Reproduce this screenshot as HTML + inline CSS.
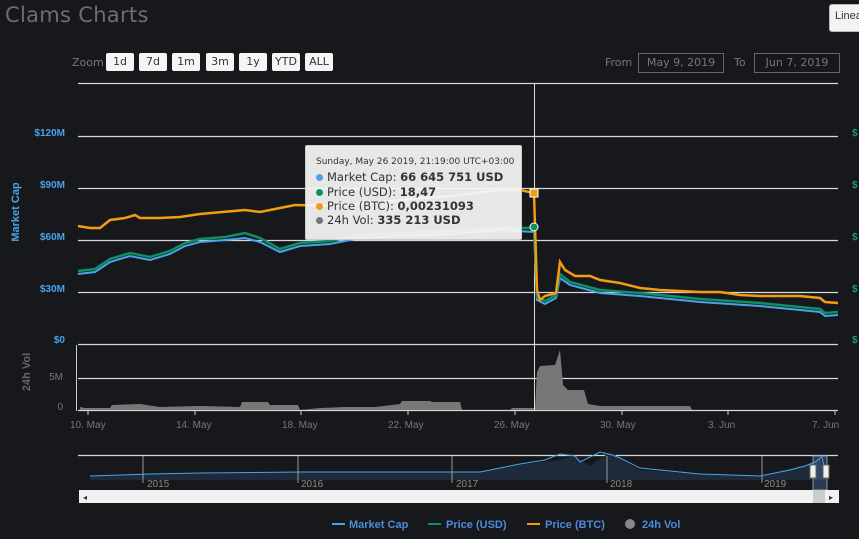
<!DOCTYPE html>
<html><head><meta charset="utf-8"><style>
body{margin:0;width:859px;height:539px;background:#17181c;overflow:hidden;font-family:"Liberation Sans","DejaVu Sans",sans-serif;position:relative}
.t{position:absolute;left:5px;top:3px;font-size:21px;color:#6e6e6e;font-family:"DejaVu Sans",sans-serif;letter-spacing:0.3px}
.btn{position:absolute;top:53px;height:18px;background:#f5f5f5;border-radius:2px;font-size:11px;color:#333;text-align:center;line-height:18px;font-family:"DejaVu Sans",sans-serif}
.lbl{position:absolute;font-size:11px;color:#777;font-family:"DejaVu Sans",sans-serif}
.inp{position:absolute;top:53px;height:18px;border:1px solid #666;color:#777;font-size:11px;line-height:18px;text-align:center;font-family:"DejaVu Sans",sans-serif}
.tip{position:absolute;left:305px;top:145px;width:215px;height:93px;background:rgba(247,247,247,0.93);border:1px solid #ccc;border-radius:2px;font-size:11.5px;color:#333;font-family:"DejaVu Sans",sans-serif}
.tip div{position:absolute;left:10px;white-space:nowrap}
.d{display:inline-block;width:7px;height:7px;border-radius:50%;margin-right:4px}
</style></head><body>
<div class="t">Clams Charts</div>
<div style="position:absolute;left:829px;top:4px;width:40px;height:26px;background:#f3f3f3;border:1px solid #bbb;border-radius:3px;font-size:11px;line-height:22px;padding-left:5px;color:#333">Linear</div>
<div class="lbl" style="left:72px;top:56px">Zoom</div>
<div class="btn" style="left:106px;width:28px">1d</div>
<div class="btn" style="left:139px;width:28px">7d</div>
<div class="btn" style="left:172px;width:28px">1m</div>
<div class="btn" style="left:206px;width:28px">3m</div>
<div class="btn" style="left:239px;width:28px">1y</div>
<div class="btn" style="left:272px;width:28px">YTD</div>
<div class="btn" style="left:305px;width:28px">ALL</div>
<div class="lbl" style="left:605px;top:56px">From</div>
<div class="inp" style="left:638px;width:84px">May 9, 2019</div>
<div class="lbl" style="left:734px;top:56px">To</div>
<div class="inp" style="left:754px;width:84px">Jun 7, 2019</div>
<svg width="859" height="539" style="position:absolute;left:0;top:0" font-family="Liberation Sans,sans-serif">
<g stroke="#d8d8d8" stroke-width="1.2">
<line x1="78" y1="83.5" x2="838" y2="83.5"/><line x1="78" y1="136.5" x2="838" y2="136.5"/><line x1="78" y1="188.5" x2="838" y2="188.5"/><line x1="78" y1="240.5" x2="838" y2="240.5"/><line x1="78" y1="292.5" x2="838" y2="292.5"/><line x1="78" y1="344.5" x2="838" y2="344.5"/><line x1="78" y1="378.5" x2="838" y2="378.5"/><line x1="78" y1="410.5" x2="838" y2="410.5"/>
<line x1="78" y1="455.5" x2="838" y2="455.5"/>
</g>
<line x1="76.5" y1="345" x2="76.5" y2="411" stroke="#ccc"/>
<g fill="#4aa3e8" font-size="10" font-weight="bold" text-anchor="end"><text x="65" y="136">$120M</text><text x="65" y="188">$90M</text><text x="65" y="240">$60M</text><text x="65" y="292">$30M</text><text x="65" y="343">$0</text></g>
<g fill="#1a9c70" font-size="10" font-weight="bold"><text x="852" y="136">$</text><text x="852" y="188">$</text><text x="852" y="240">$</text><text x="852" y="292">$</text><text x="852" y="343">$</text></g>
<text x="19" y="212" fill="#4aa3e8" font-size="11" font-weight="bold" transform="rotate(-90 19 212)" text-anchor="middle">Market Cap</text>
<text x="30" y="372" fill="#666" font-size="11" font-weight="bold" transform="rotate(-90 30 372)" text-anchor="middle">24h Vol</text>
<g fill="#777" font-size="10" text-anchor="end"><text x="63" y="380">5M</text><text x="63" y="410">0</text></g>
<path fill="#777" d="M80 410 L80 407 L85 408 L110 408 L112 405 L140 404 L160 407 L200 406 L240 407 L242 402 L268 402 L270 405 L298 405 L300 410 L320 408 L345 407 L375 407 L400 404 L402 401 L430 401 L432 402 L460 402 L462 410 L510 410 L512 408 L535 408 L537 372 L540 366 L555 365 L560 350 L563 385 L568 390 L584 390 L588 404 L600 406 L690 406 L692 410 Z"/>
<line x1="534.5" y1="84" x2="534.5" y2="411" stroke="#ddd"/>
<g stroke="#ccc"><line x1="88" y1="410" x2="88" y2="415"/><line x1="195" y1="410" x2="195" y2="415"/><line x1="301" y1="410" x2="301" y2="415"/><line x1="408" y1="410" x2="408" y2="415"/><line x1="515" y1="410" x2="515" y2="415"/><line x1="622" y1="410" x2="622" y2="415"/><line x1="728" y1="410" x2="728" y2="415"/><line x1="835" y1="410" x2="835" y2="415"/></g>
<g fill="#777" font-size="10"><text x="70" y="428">10. May</text><text x="176" y="428">14. May</text><text x="282" y="428">18. May</text><text x="388" y="428">22. May</text><text x="494" y="428">26. May</text><text x="600" y="428">30. May</text><text x="708" y="428">3. Jun</text><text x="812" y="428">7. Jun</text></g>
<polyline fill="none" stroke="#4aa3e8" stroke-width="2" points="78,274 95,272 110,262 130,256 150,260 170,254 185,246 200,242 225,240 245,238 260,242 280,252 300,246 330,244 360,238 400,236 450,234 500,230 534,232 537,300 545,304 556,298 560,278 570,285 600,293 640,296 700,302 760,306 800,310 820,312 825,316 838,315"/>
<polyline fill="none" stroke="#0e8f66" stroke-width="2.5" points="78,271 95,269 110,259 130,253 150,257 170,251 185,243 200,239 225,237 245,233 260,238 280,249 300,243 330,241 360,235 400,233 450,231 500,228 534,228 537,297 545,301 556,295 560,274 570,282 600,290 640,293 700,299 760,303 800,307 820,309 825,313 838,312"/>
<polyline fill="none" stroke="#f39c12" stroke-width="2.5" points="78,226 90,228 100,228 105,224 110,220 125,218 135,215 140,218 160,218 180,217 200,214 245,210 260,212 275,209 295,205 340,206 400,200 450,196 500,190 520,190 534,193 537,290 540,300 545,296 556,293 560,262 565,270 575,276 590,276 600,280 620,283 640,288 660,290 700,292 720,292 740,295 760,296 800,296 820,298 825,302 838,303"/>
<rect x="530" y="189" width="8" height="8" fill="#f39c12" stroke="#fff"/>
<circle cx="534" cy="227" r="4" fill="#0e8f66" stroke="#fff"/>
<path d="M90 476 L150 474 L200 473 L300 472 L480 472 L510 466 L560 460 L575 456 L590 466 L610 452 L620 458 L640 470 L700 474 L760 476 L800 466 L812 464 L820 456 L825 480 L90 480 Z" fill="#1e2a3a"/>
<polyline fill="none" stroke="#4aa3e8" stroke-width="1" points="90,476 150,474 200,473 300,472 480,472 500,468 520,464 545,460 560,454 575,456 580,462 600,452 612,455 620,458 640,468 700,474 760,476 790,470 805,466 815,462 822,457 825,470"/>
<g stroke="#999"><line x1="143" y1="456" x2="143" y2="483"/><line x1="298" y1="456" x2="298" y2="483"/><line x1="452" y1="456" x2="452" y2="483"/><line x1="607" y1="456" x2="607" y2="483"/><line x1="762" y1="456" x2="762" y2="483"/></g>
<g fill="#888" font-size="10"><text x="147" y="487">2015</text><text x="301" y="487">2016</text><text x="456" y="487">2017</text><text x="610" y="487">2018</text><text x="764" y="487">2019</text></g>
<rect x="813" y="456" width="14" height="34" fill="rgba(100,140,200,0.3)" stroke="#89a"/>
<rect x="810" y="465" width="6" height="13" fill="#eee" stroke="#666"/><rect x="823" y="465" width="6" height="13" fill="#eee" stroke="#666"/>
<rect x="79" y="490" width="760" height="13" fill="#f0f0f0"/>
<rect x="813" y="490" width="12" height="13" fill="#ccc"/>
<text x="83" y="500" font-size="8" fill="#333">◂</text><text x="829" y="500" font-size="8" fill="#333">▸</text>
<line x1="332" y1="524" x2="345" y2="524" stroke="#4aa3e8" stroke-width="2"/>
<line x1="428" y1="524" x2="441" y2="524" stroke="#0e8f66" stroke-width="2"/>
<line x1="527" y1="524" x2="540" y2="524" stroke="#f39c12" stroke-width="2"/>
<circle cx="630" cy="524" r="5" fill="#888"/>
<g fill="#4a8cd9" font-size="11" font-weight="bold"><text x="349" y="528">Market Cap</text><text x="446" y="528">Price (USD)</text><text x="545" y="528">Price (BTC)</text><text x="642" y="528">24h Vol</text></g>
</svg>
<div class="tip">
<div style="top:11px;font-size:9px">Sunday, May 26 2019, 21:19:00 UTC+03:00</div>
<div style="top:24px"><span class="d" style="background:#4aa3e8"></span>Market Cap: <b>66 645 751 USD</b></div>
<div style="top:39px"><span class="d" style="background:#0e8f66"></span>Price (USD): <b>18,47</b></div>
<div style="top:53px"><span class="d" style="background:#f39c12"></span>Price (BTC): <b>0,00231093</b></div>
<div style="top:67px"><span class="d" style="background:#777"></span>24h Vol: <b>335 213 USD</b></div>
</div>
</body></html>
